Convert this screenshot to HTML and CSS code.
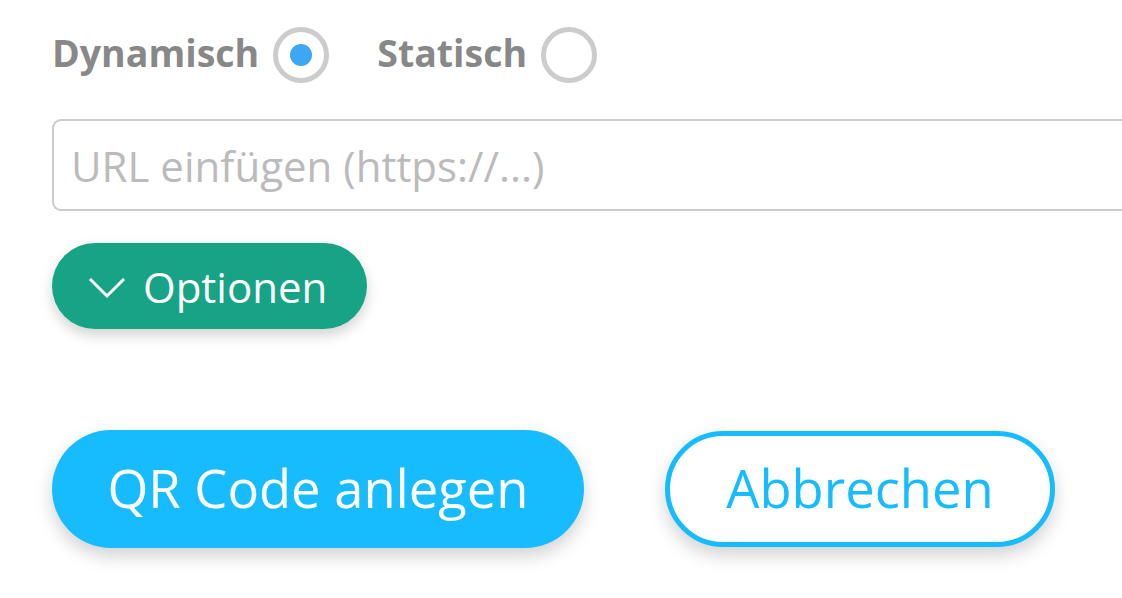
FILE: index.html
```html
<!DOCTYPE html>
<html lang="de">
<head>
<meta charset="utf-8">
<title>QR Code anlegen</title>
<link rel="stylesheet" href="styles.css">
</head>
<body>
<div class="form">
  <div class="type-row">
    <label class="radio">
      <span class="radio-label">Dynamisch</span>
      <span class="radio-circle checked"><span class="radio-dot"></span></span>
    </label>
    <label class="radio">
      <span class="radio-label">Statisch</span>
      <span class="radio-circle"></span>
    </label>
  </div>
  <div class="url-input">
    <span class="placeholder">URL einfügen (https://...)</span>
  </div>
  <div class="options-row">
    <button class="options-btn">
      <svg class="chevron" width="38" height="22" viewBox="0 0 38 22"><path d="M2 2 L19 19 L36 2" fill="none" stroke="#fff" stroke-width="3"/></svg>
      <span>Optionen</span>
    </button>
  </div>
  <div class="actions">
    <button class="btn-primary">QR Code anlegen</button>
    <button class="btn-secondary">Abbrechen</button>
  </div>
</div>
</body>
</html>
```
FILE: styles.css
```css
html {
  overflow: hidden;
}
html, body {
  margin: 0;
  padding: 0;
  background: #fff;
}
body {
  font-family: "Open Sans", "Noto Sans", sans-serif;
}
.form {
  padding: 27px 0 60px 52px;
  display: flex;
  flex-direction: column;
}
.type-row {
  display: flex;
  align-items: center;
  gap: 48px;
  height: 56px;
}
.radio {
  display: flex;
  align-items: center;
  gap: 14px;
}
.radio-label {
  font-weight: 700;
  font-size: 37.5px;
  color: #888;
  line-height: 1;
  padding-bottom: 4px;
}
.radio-circle {
  width: 46px;
  height: 46px;
  border: 5px solid #ccc;
  border-radius: 50%;
  display: flex;
  align-items: center;
  justify-content: center;
  box-sizing: content-box;
}
.radio-dot {
  width: 22px;
  height: 22px;
  border-radius: 50%;
  background: #3ea7f4;
}
.url-input {
  margin-top: 36px;
  height: 88px;
  border: 2px solid #ccc;
  border-right: none;
  border-radius: 9px 0 0 9px;
  display: flex;
  align-items: center;
  padding-left: 17px;
}
.placeholder {
  font-size: 42px;
  color: #bbb;
}
.options-row {
  margin-top: 32px;
  display: flex;
}
.options-btn {
  height: 86px;
  padding: 0 40px 0 36px;
  border: none;
  border-radius: 43px;
  background: #17a386;
  color: #fff;
  font-family: inherit;
  font-size: 42px;
  display: flex;
  align-items: center;
  gap: 17px;
  box-shadow: 0 6px 14px rgba(0,0,0,0.18);
}
.chevron {
  margin-top: 4px;
}
.actions {
  margin-top: 101px;
  display: flex;
  gap: 81px;
  align-items: center;
}
.btn-primary {
  height: 118px;
  width: 532px;
  border: none;
  border-radius: 59px;
  background: #17bcff;
  color: #fff;
  font-family: inherit;
  font-size: 52.5px;
  padding: 0 0 4px;
  box-shadow: 0 8px 18px rgba(0,0,0,0.18);
}
.btn-secondary {
  height: 116px;
  width: 390px;
  border: 5px solid #17bcff;
  border-radius: 58px;
  background: #fff;
  color: #17bcff;
  font-family: inherit;
  font-size: 52.5px;
  padding: 0 0 4px;
  box-shadow: 0 8px 18px rgba(0,0,0,0.18);
}
```
